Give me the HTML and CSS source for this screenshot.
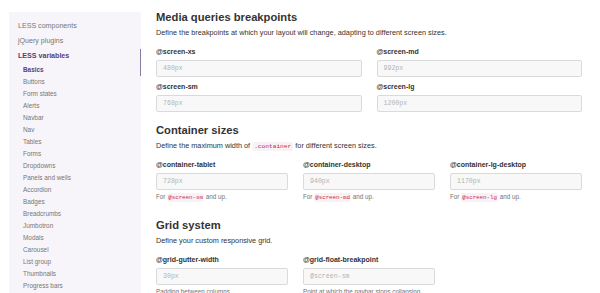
FILE: index.html
```html
<!DOCTYPE html>
<html lang="en">
<head>
  <meta charset="UTF-8" />
  <title>Customize - LESS variables</title>
  <link rel="stylesheet" href="styles.css">
</head>
<body>
  <div class="page">
    <div class="sidebar">
      <ul class="nav">
        <li><a href="#less">LESS components</a></li>
        <li><a href="#plugins">jQuery plugins</a></li>
        <li class="active">
          <a href="#less-variables">LESS variables</a>
          <ul class="subnav">
            <li class="active"><a href="#variables-basics">Basics</a></li>
            <li><a href="#variables-buttons">Buttons</a></li>
            <li><a href="#variables-form-states">Form states</a></li>
            <li><a href="#variables-alerts">Alerts</a></li>
            <li><a href="#variables-navbar">Navbar</a></li>
            <li><a href="#variables-nav">Nav</a></li>
            <li><a href="#variables-tables">Tables</a></li>
            <li><a href="#variables-forms">Forms</a></li>
            <li><a href="#variables-dropdowns">Dropdowns</a></li>
            <li><a href="#variables-panels">Panels and wells</a></li>
            <li><a href="#variables-accordion">Accordion</a></li>
            <li><a href="#variables-badges">Badges</a></li>
            <li><a href="#variables-breadcrumbs">Breadcrumbs</a></li>
            <li><a href="#variables-jumbotron">Jumbotron</a></li>
            <li><a href="#variables-modals">Modals</a></li>
            <li><a href="#variables-carousel">Carousel</a></li>
            <li><a href="#variables-list-group">List group</a></li>
            <li><a href="#variables-thumbnails">Thumbnails</a></li>
            <li><a href="#variables-progress">Progress bars</a></li>
          </ul>
        </li>
      </ul>
    </div>

    <div class="main">
      <div class="section">
        <h2>Media queries breakpoints</h2>
        <p>Define the breakpoints at which your layout will change, adapting to different screen sizes.</p>
        <div class="row two">
          <div class="col">
            <div class="form-group">
              <label>@screen-xs</label>
              <input type="text" placeholder="480px" disabled>
            </div>
            <div class="form-group">
              <label>@screen-sm</label>
              <input type="text" placeholder="768px" disabled>
            </div>
          </div>
          <div class="col">
            <div class="form-group">
              <label>@screen-md</label>
              <input type="text" placeholder="992px" disabled>
            </div>
            <div class="form-group">
              <label>@screen-lg</label>
              <input type="text" placeholder="1200px" disabled>
            </div>
          </div>
        </div>
      </div>

      <div class="section">
        <h2>Container sizes</h2>
        <p>Define the maximum width of <code>.container</code> for different screen sizes.</p>
        <div class="row three">
          <div class="form-group">
            <label>@container-tablet</label>
            <input type="text" placeholder="728px" disabled>
            <div class="help">For <code>@screen-sm</code> and up.</div>
          </div>
          <div class="form-group">
            <label>@container-desktop</label>
            <input type="text" placeholder="940px" disabled>
            <div class="help">For <code>@screen-md</code> and up.</div>
          </div>
          <div class="form-group">
            <label>@container-lg-desktop</label>
            <input type="text" placeholder="1170px" disabled>
            <div class="help">For <code>@screen-lg</code> and up.</div>
          </div>
        </div>
      </div>

      <div class="section">
        <h2>Grid system</h2>
        <p>Define your custom responsive grid.</p>
        <div class="row three">
          <div class="form-group">
            <label>@grid-gutter-width</label>
            <input type="text" placeholder="30px" disabled>
            <div class="help">Padding between columns.</div>
          </div>
          <div class="form-group">
            <label>@grid-float-breakpoint</label>
            <input type="text" placeholder="@screen-sm" disabled>
            <div class="help">Point at which the navbar stops collapsing.</div>
          </div>
        </div>
      </div>
    </div>
  </div>
</body>
</html>
```

FILE: styles.css
```css
html,
body {
  margin: 0;
  padding: 0;
  overflow: hidden;
  background-color: #fff;
}

body {
  font-family: 'Liberation Sans', Arial, Helvetica, sans-serif;
  color: #333;
}

.page {
  display: flex;
  align-items: flex-start;
  gap: 15px;
  padding-left: 9px;
}

/* sidebar */
.sidebar {
  width: 132px;
  flex-shrink: 0;
  margin-top: 12px;
  background-color: #f7f5fa;
  padding: 7px 0 40px;
  min-height: 300px;
}

.nav,
.subnav {
  list-style: none;
  margin: 0;
  padding: 0;
}

.nav > li > a {
  display: block;
  padding: 3px 0 3px 9px;
  line-height: 9px;
  font-size: 7.1px;
  color: #767676;
  text-decoration: none;
}

.subnav > li > a {
  display: block;
  padding: 0 0 0 14px;
  line-height: 12px;
  font-size: 6.4px;
  color: #767676;
  text-decoration: none;
}

.nav > li.active > a,
.subnav > li.active > a {
  color: #563d7c;
  font-weight: bold;
  border-right: 1px solid #8a7aa6;
}

/* main column */
.main {
  width: 426px;
  flex-shrink: 0;
  padding-top: 10px;
}

.section {
  margin-bottom: 6px;
}

h2 {
  margin: 0;
  font-size: 11.2px;
  line-height: 14px;
  font-weight: bold;
  color: #333;
}

p {
  margin: 4px 0 9px;
  font-size: 7.3px;
  line-height: 10px;
}

.row {
  display: grid;
  column-gap: 15px;
}

.row.two {
  grid-template-columns: repeat(2, 1fr);
}

.row.three {
  grid-template-columns: repeat(3, 1fr);
}

.form-group {
  margin-bottom: 5px;
}

label {
  display: block;
  margin-bottom: 3px;
  font-size: 7px;
  line-height: 10px;
  font-weight: bold;
  color: #333;
}

input[type="text"] {
  display: block;
  width: 100%;
  height: 17px;
  box-sizing: border-box;
  margin: 0;
  padding: 0 6px;
  border: 1px solid #dadada;
  border-radius: 2px;
  background-color: #f8f8f8;
  font-family: 'Liberation Mono', 'Courier New', monospace;
  font-size: 6.6px;
}

input[type="text"]::placeholder {
  color: #b4b4b4;
}

code {
  font-family: 'Liberation Mono', 'Courier New', monospace;
  font-size: 6.2px;
  line-height: 1;
  color: #c7254e;
  background-color: #f9f2f4;
  padding: 1px 2px;
  border-radius: 2px;
}

.help {
  height: 10px;
  margin: 2px 0 5px;
  font-size: 6.3px;
  line-height: 10px;
  color: #737373;
}

.help code {
  font-size: 5.8px;
  padding: 1px 1px;
}
```
